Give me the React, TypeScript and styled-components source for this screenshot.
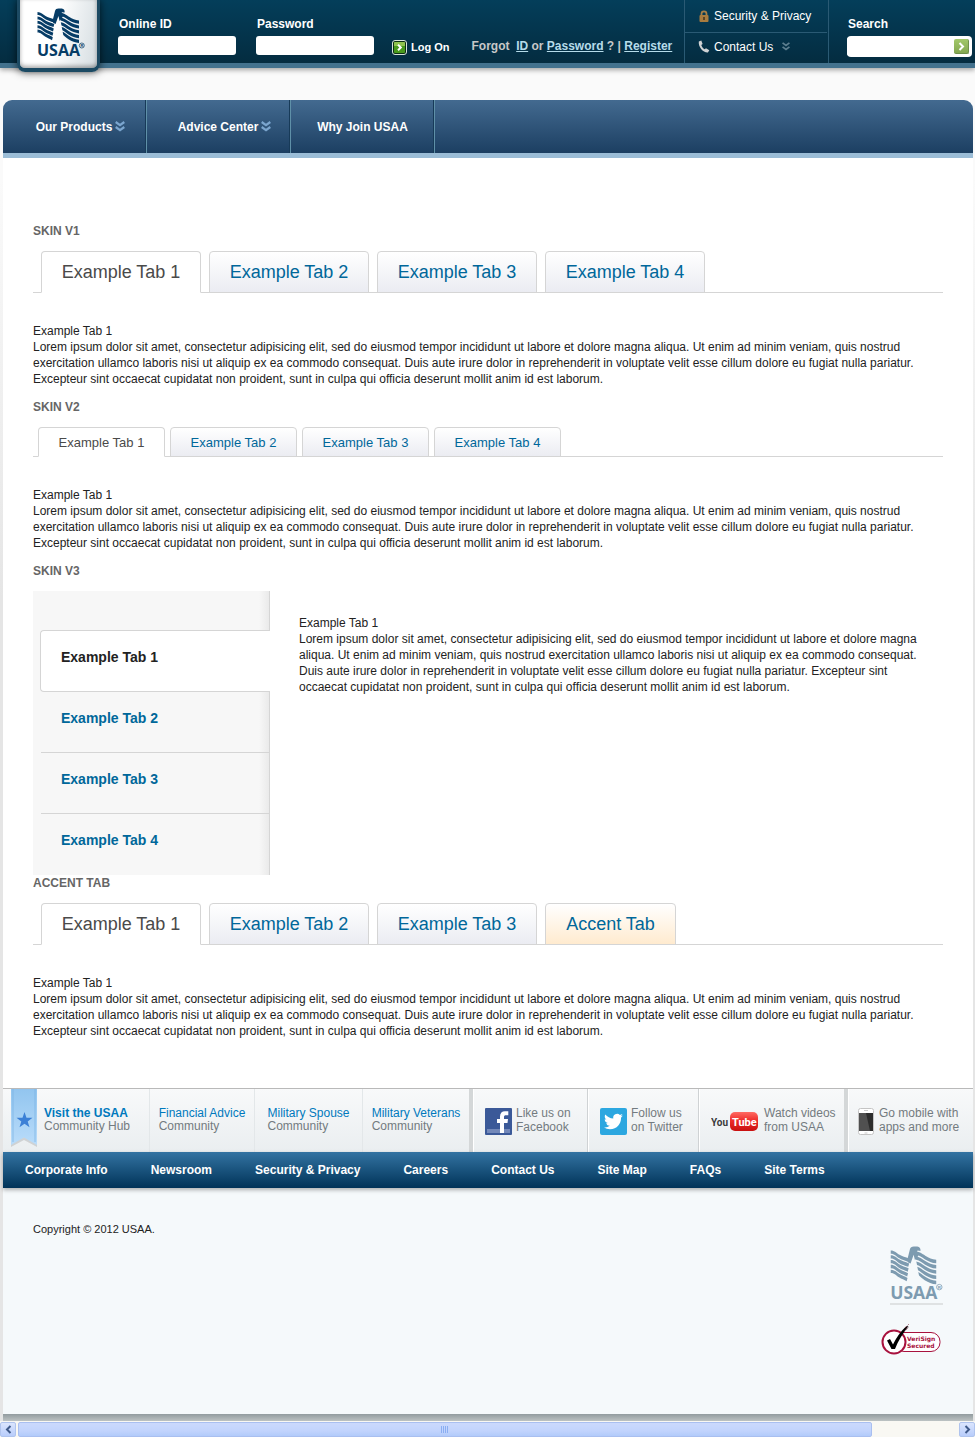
import React, { useState } from "react";
import styled, { createGlobalStyle } from "styled-components";

const sans = `"Liberation Sans", Arial, Helvetica, sans-serif`;
const blue = "#00679a";
const rule = "#d5d5d5";

const GlobalStyle = createGlobalStyle`
  *, *::before, *::after { box-sizing: border-box; }
  body {
    margin: 0;
    background: linear-gradient(#fafafa 0, #fafafa 180px, #e5e5e5 600px, #e5e5e5 100%);
    color: #222;
    font: 12px/16px ${sans};
  }
  a { color: inherit; text-decoration: none; }
  button, input { font: inherit; }
  button { cursor: pointer; }
  svg { display: block; flex: none; }
`;

/* ---------- header ---------- */

const Header = styled.header`
  display: flex;
  align-items: flex-start;
  height: 68px;
  background: linear-gradient(#043e5a, #042c40);
  border-bottom: 5px solid #43728e;
  box-shadow: 0 2px 5px rgba(0, 0, 0, 0.35);
`;

const LogoTab = styled.a`
  flex: none;
  width: 83px;
  height: 72px;
  margin: 0 18px -9px 17px;
  padding: 8px 0 0 17px;
  background: linear-gradient(100deg, #fff 45%, #d5dde1);
  border: solid #1c4a63;
  border-width: 0 3px 4px;
  border-radius: 0 0 8px 8px;
  box-shadow: inset 0 -2px 4px rgba(0, 0, 0, 0.35), 0 0 8px rgba(0, 0, 0, 0.7);
`;

const Field = styled.div`
  display: flex;
  flex-direction: column;
  gap: 4px;
  padding-top: 16px;
  margin-right: 20px;
`;

const FieldLabel = styled.label`
  padding-left: 1px;
  color: #fff;
  font-weight: bold;
`;

const TextInput = styled.input`
  width: 118px;
  height: 19px;
  padding: 0 4px;
  border: 0;
  border-radius: 3px;
  background: #fff;
`;

const LogOn = styled.button`
  display: flex;
  align-items: center;
  gap: 4px;
  margin: 39px 22px 0 -2px;
  padding: 0;
  border: 0;
  background: none;
  color: #fff;
  font-size: 11px;
  font-weight: bold;
  line-height: 16px;
`;

const Forgot = styled.p`
  margin: 38px 0 0;
  color: #c8c8c8;
  font-weight: bold;
  white-space: nowrap;
  a { color: #b6dcea; text-decoration: underline; }
`;

const HeaderEnd = styled.div`
  display: flex;
  margin-left: auto;
`;

const Utility = styled.nav`
  width: 145px;
  height: 63px;
  border: solid #2a5a74;
  border-width: 0 1px;
`;

const UtilityLink = styled.a`
  display: flex;
  align-items: center;
  gap: 4px;
  height: 32px;
  padding-left: 13px;
  color: #fff;
  & + & {
    height: 28px;
    margin-right: 1px;
    border-top: 1px solid #2a5a74;
  }
  svg:last-child:not(:first-child) { margin-left: 5px; }
`;

const SearchForm = styled.form`
  display: flex;
  flex-direction: column;
  gap: 4px;
  padding: 16px 3px 0 18px;
`;

const SearchBox = styled.div`
  display: flex;
  align-items: center;
  width: 125px;
  height: 21px;
  padding-right: 3px;
  border-radius: 4px;
  background: #fff;
`;

const SearchInput = styled(TextInput)`
  flex: 1;
  min-width: 0;
`;

const GoButton = styled.button`
  display: grid;
  place-items: center;
  width: 15px;
  height: 15px;
  padding: 0;
  border: solid #6f914a;
  border-width: 0 1px 1px 0;
  border-radius: 2px;
  background: linear-gradient(#a3c96a, #84a851);
`;

/* ---------- main navigation ---------- */

const Page = styled.div`
  margin: 32px 2px 0 3px;
`;

const MainNav = styled.nav`
  display: flex;
  height: 58px;
  border-bottom: 5px solid #9bbdd7;
  border-radius: 9px 9px 0 0;
  background: linear-gradient(#436a90, #1c3f62);
`;

const MainLink = styled.a<{ $menu?: boolean }>`
  display: flex;
  align-items: center;
  justify-content: center;
  gap: 3px;
  width: 144px;
  padding-left: ${(p) => (p.$menu ? 12 : 0)}px;
  border-right: 1px solid #5f90a8;
  box-shadow: inset -1px 0 #173a58;
  color: #fff;
  font-weight: bold;
`;

/* ---------- tab sets ---------- */

const Main = styled.main`
  padding: 65px 30px 49px;
  background: #fff;
`;

const Heading = styled.h2`
  margin: 0 0 12px;
  color: #666;
  font-size: 12px;
  line-height: 16px;
`;

const Section = styled.section<{ $flush?: boolean }>`
  margin-bottom: ${(p) => (p.$flush ? 0 : 12)}px;
  &:last-child { margin-bottom: 0; }
`;

const TabList = styled.div<{ $small?: boolean }>`
  display: flex;
  gap: ${(p) => (p.$small ? 5 : 8)}px;
  height: ${(p) => (p.$small ? 30 : 42)}px;
  padding-left: ${(p) => (p.$small ? 5 : 8)}px;
  margin-bottom: 30px;
  box-shadow: inset 0 -1px ${rule};
`;

const Tab = styled.button<{ $small?: boolean; $accent?: boolean }>`
  min-width: ${(p) => (p.$accent ? 131 : p.$small ? 127 : 160)}px;
  padding: ${(p) => (p.$small ? 2 : 0)}px 0 0;
  border: 1px solid ${rule};
  border-radius: 4px 4px 0 0;
  background: linear-gradient(#fff, ${(p) => (p.$accent ? "#ffebcf" : "#ebecf2")});
  color: ${blue};
  font-size: ${(p) => (p.$small ? 13 : 18)}px;
  line-height: ${(p) => (p.$small ? 16 : 24)}px;
  &[aria-selected="true"] {
    border-bottom-color: #fff;
    background: #fff;
    color: #4a4a4a;
  }
`;

const Panel = styled.div`
  p { margin: 0; }
`;

const SideLayout = styled.div`
  display: flex;
  gap: 29px;
  min-height: 284px;
  ${Panel} { flex: 1; padding: 24px 8px 0 0; }
`;

const SideTabs = styled.div`
  flex: none;
  width: 237px;
  padding: 39px 0 0 7px;
  background: linear-gradient(to left, ${rule} 1px, #eaeaea 1px, #f7f7f7 11px);
`;

const SideTab = styled.button`
  display: block;
  width: 229px;
  height: 61px;
  margin-left: 1px;
  padding: 0 20px 8px;
  border: 0;
  border-bottom: 1px solid ${rule};
  background: none;
  color: ${blue};
  font-size: 14px;
  font-weight: bold;
  text-align: left;
  &:last-child { border-bottom-color: transparent; }
  &[aria-selected="true"] {
    width: 230px;
    height: 62px;
    margin-left: 0;
    border: 1px solid ${rule};
    border-right: 0;
    border-radius: 4px 0 0 4px;
    background: #fff;
    color: #222;
  }
`;

/* ---------- footer ---------- */

const Community = styled.div`
  display: grid;
  grid-template-columns: 147px 105px 108px 110px 115px 111px 149px 1fr;
  height: 64px;
  border-top: 1px solid #b9b9b9;
  background: linear-gradient(#f8f9fa, #eaeef0);
`;

const CommunityLink = styled.a<{ $lead?: boolean; $end?: boolean }>`
  display: flex;
  justify-content: ${(p) => (p.$lead ? "flex-start" : "center")};
  padding-top: 18px;
  border-right: ${(p) => (p.$end ? "4px solid #d4d7d8" : "1px solid #e3e7e9")};
  color: #737b80;
  line-height: 13px;
  white-space: nowrap;
  strong {
    display: block;
    color: #0079bd;
    font-weight: ${(p) => (p.$lead ? "bold" : "normal")};
  }
`;

const Hub = styled.div`
  display: flex;
  gap: 6px;
  padding-left: 7px;
  ${CommunityLink} { flex: 1; }
`;

const SocialLink = styled.a<{ $end?: boolean }>`
  display: flex;
  align-items: center;
  gap: 4px;
  padding: 2px 0 0 11px;
  border-left: 1px solid #fff;
  border-right: ${(p) => (p.$end ? "4px solid #d4d7d8" : "1px solid #cfd2d4")};
  color: #737b80;
  line-height: 14px;
  white-space: nowrap;
  span { padding-bottom: 3px; }
  &:last-child { border-right: 0; padding-left: 9px; }
`;

const FooterNav = styled.nav`
  position: relative;
  display: flex;
  align-items: center;
  gap: 43px;
  height: 36px;
  padding-left: 22px;
  background: linear-gradient(#3373a2, #003358);
  box-shadow: 0 2px 4px rgba(0, 0, 0, 0.3);
  color: #fff;
  font-weight: bold;
  white-space: nowrap;
`;

const Legal = styled.footer`
  display: flex;
  justify-content: space-between;
  height: 226px;
  padding: 33px 30px 0;
  background: #f5f9fb;
  font-size: 11px;
  p { margin: 0; }
`;

const Seals = styled.div`
  display: flex;
  flex-direction: column;
  align-items: flex-end;
  gap: 19px;
  padding-top: 25px;
`;

const Seal = styled.a<{ $line?: boolean }>`
  margin-right: ${(p) => (p.$line ? 0 : 2)}px;
  border-bottom: ${(p) => (p.$line ? "2px solid #dfe2e3" : "0")};
`;

const PageShadow = styled.div`
  height: 7px;
  background: linear-gradient(#929c9f, #bcc2c3);
`;

const ScrollBar = styled.div`
  display: flex;
  height: 16px;
  padding-top: 1px;
  gap: 2px;
  background: #f9f8f3;
`;

const ScrollButton = styled.button`
  display: grid;
  place-items: center;
  width: 16px;
  padding: 0;
  border: 1px solid #b0c4ee;
  border-radius: 2px;
  background: linear-gradient(#dbe5fe, #b8cdfb);
`;

const ScrollTrack = styled.div`
  flex: 1;
  display: flex;
`;

const ScrollThumb = styled.div`
  display: grid;
  place-items: center;
  width: 91%;
  border: 1px solid #a9bff0;
  border-radius: 2px;
  background: linear-gradient(#cbd9fd, #c2d4fd 60%, #b2cbfa);
`;

/* ---------- drawings ---------- */

const feathers = [0, 1, 2, 3, 4];

function EagleLogo({ color, width = 48, height = 52 }: { color: string; width?: number; height?: number }) {
  return (
    <svg width={width} height={height} viewBox="0 0 48 52" role="img" aria-label="USAA">
      <g fill={color}>
        {feathers.map((i) => {
          const y = 4 + i * 4.4;
          const end = 17.8 - i * 0.5;
          return (
            <path
              key={i}
              d={`M.5 ${y}C4 ${y} 6 ${y + 2.4} 8.500 ${y + 4}C11 ${y + 5.6} 13.500 ${y + 6} ${end} ${y + 7.6}L${end - 0.8} ${y + 10.6}C13 ${y + 9.2} 10.500 ${y + 8.600} 8 ${y + 7}C5.500 ${y + 5.400} 4 ${y + 3} .5 ${y + 3}Z`}
            />
          );
        })}
        <path d="M15.500 13 18 3C18.400 1.300 19.600.5 21.500.5h3.200C27 .7 27.900 2.300 27.600 4.600L25 4.200 24 6l2 2.500-1.500 2L22.600 13l-1.200-5L18.600 16l-2.200-1z" />
        {feathers.map((i) => {
          const y = 4.6 + i * 4.8;
          const start = 22 + i * 0.9;
          return (
            <path
              key={i}
              d={`M${start} ${y}C27 ${y + 0.5} 29 ${y + 2.4} 32 ${y + 4.2}C35.500 ${y + 6.4} 38 ${y + 7.4} 42 ${y + 8}V${y + 11.2}C38 ${y + 10.800} 35 ${y + 9.600} 31.500 ${y + 7.400}C29 ${y + 5.800} 27 ${y + 3.900} ${start + 0.7} ${y + 3.200}Z`}
            />
          );
        })}
        <text x="0" y="48" fontFamily="Open Sans, Noto Sans, sans-serif" fontSize="16" fontWeight="700">USAA</text>
        <circle cx="44.800" cy="37.500" r="2.500" fill="none" stroke={color} strokeWidth=".7" />
        <text x="43.400" y="39.200" fontFamily="Liberation Sans, sans-serif" fontSize="4" fontWeight="700">R</text>
      </g>
    </svg>
  );
}

const DoubleChevron = ({ color, size = 10 }: { color: string; size?: number }) => (
  <svg width={size} height="11" viewBox="0 0 10 11" fill="none" stroke={color} strokeWidth="2.200" aria-hidden="true">
    <path d="M.7 1 5 4.200 9.300 1M.7 6 5 9.200 9.300 6" />
  </svg>
);

const LogOnIcon = () => (
  <svg width="15" height="15" viewBox="0 0 15 15" aria-hidden="true">
    <rect x=".5" y=".5" width="14" height="14" rx="2.500" fill="#0b2f14" stroke="#d8e4dc" />
    <rect x="2" y="2" width="11" height="11" rx="1" fill="#489a1c" />
    <path d="M2 3a1 1 0 0 1 1-1h9a1 1 0 0 1 1 1v3H2z" fill="#8fc34f" />
    <path d="m6 4.800 2.800 2.700L6 10.200" fill="none" stroke="#fff" strokeWidth="2" />
  </svg>
);

const LockIcon = () => (
  <svg width="12" height="13" viewBox="0 0 12 13" aria-hidden="true">
    <path d="M3.500 6V3.800a2.500 2.500 0 0 1 5 0V6" fill="none" stroke="#a98048" strokeWidth="1.800" />
    <rect x="1.500" y="5" width="9" height="7" rx="1" fill="#a97c3f" />
    <path d="M5.300 7h1.400v3H5.300z" fill="#3d2f1c" />
  </svg>
);

const PhoneIcon = () => (
  <svg width="12" height="13" viewBox="0 0 12 13" aria-hidden="true">
    <path d="M.8 1.500 3.300.6 4.600 4 3.300 5c.5 1.900 1.700 3.400 3.300 4.300l1.400-1 3.300 2-1.400 2.200C5 12.800.2 7 .8 1.500z" fill="#d0d3d5" />
  </svg>
);

const Ribbon = () => (
  <svg width="28" height="58" viewBox="0 0 28 58" aria-hidden="true">
    <defs>
      <linearGradient id="ribbon" x1="0" y1="0" x2="0" y2="1">
        <stop offset="0" stopColor="#92c5ef" />
        <stop offset="1" stopColor="#b9dcfa" />
      </linearGradient>
    </defs>
    <path d="M1 1h26v57l-13-7-13 7z" fill="#000" opacity=".12" />
    <path d="M1 0h26v56l-13-7.500L1 56z" fill="url(#ribbon)" />
    <path d="M3 0v53M25 0v53" stroke="#79b2e4" opacity=".7" />
    <path d="m14.500 23 2 5.800h6l-4.800 3.700 1.800 5.800-5-3.500-5 3.500 1.800-5.800-4.800-3.700h6z" fill="#3c80d6" />
  </svg>
);

const FacebookIcon = () => (
  <svg width="27" height="27" viewBox="0 0 27 27" aria-hidden="true">
    <rect width="27" height="27" rx="1" fill="#3b5998" />
    <path d="M2 21h23v4H2z" fill="#7388b9" />
    <path d="M15 25V15h-3v-4h3V8.500C15 5 17 3.300 20 3.300h3.300v4H21c-1.500 0-2 .6-2 1.900V11h4l-.5 4H19v10z" fill="#fff" />
  </svg>
);

const TwitterIcon = () => (
  <svg width="27" height="27" viewBox="0 0 27 27" aria-hidden="true">
    <rect width="27" height="27" rx="2" fill="#2ca7e0" />
    <path transform="translate(4 4) scale(.79)" fill="#fff" d="M23.950 4.570a10 10 0 0 1-2.820.77 4.960 4.960 0 0 0 2.160-2.720c-.95.550-2 .96-3.130 1.180a4.920 4.920 0 0 0-8.380 4.480C7.690 8.100 4.070 6.130 1.640 3.160a4.820 4.820 0 0 0-.67 2.480c0 1.710.87 3.210 2.190 4.100a4.900 4.900 0 0 1-2.230-.62v.06a4.920 4.920 0 0 0 3.950 4.830 5 5 0 0 1-2.210.08 4.940 4.940 0 0 0 4.600 3.420A9.870 9.870 0 0 1 0 19.540a13.990 13.990 0 0 0 7.550 2.210c9.050 0 14-7.500 14-13.980l-.02-.64a9.930 9.930 0 0 0 2.420-2.560z" />
  </svg>
);

const YouTubeIcon = () => (
  <svg width="49" height="22" viewBox="0 0 49 22" role="img" aria-label="YouTube">
    <defs>
      <linearGradient id="tube" x1="0" y1="0" x2="0" y2="1">
        <stop offset="0" stopColor="#ff6a62" />
        <stop offset=".45" stopColor="#ee2c2a" />
        <stop offset="1" stopColor="#c8100f" />
      </linearGradient>
    </defs>
    <rect x="19" y="1" width="28" height="19" rx="5" fill="url(#tube)" />
    <g fontFamily="Roboto, Liberation Sans, sans-serif" fontWeight="bold">
      <text x="0" y="15" fill="#3a3a3a" fontSize="10">You</text>
      <text x="21" y="15" fill="#fff" fontSize="11">Tube</text>
    </g>
  </svg>
);

const MobileIcon = () => (
  <svg width="17" height="28" viewBox="0 0 17 28" aria-hidden="true">
    <rect x=".5" y=".5" width="15" height="26" rx="2" fill="#fff" stroke="#c4c4c4" />
    <rect x="1" y="5" width="14" height="18" fill="#2c2c2c" />
    <path d="M1 5h7l4 18H1z" fill="#505050" />
    <path d="M6 2.500h4M6.500 25h3" stroke="#ccc" />
  </svg>
);

const VeriSignSeal = () => (
  <svg width="60" height="32" viewBox="0 0 60 32" role="img" aria-label="VeriSign Secured">
    <rect x="14" y="8.500" width="45" height="19" rx="9" fill="#fff" stroke="#a8123e" />
    <circle cx="13" cy="18" r="11.500" fill="#fff" stroke="#a8123e" strokeWidth="2" />
    <path d="M6 16.500 9 15l3 5.500C15 14 19.500 7.500 25 2.500L27.500 2C22 9 17 17 14 25h-3.500z" fill="#000" />
    <path d="m24 4 4-4M23.500 7 28 3" stroke="#7a2036" strokeDasharray="1 1" />
    <g fill="#a8123e" fontFamily="DejaVu Sans, sans-serif" fontSize="6" fontWeight="bold">
      <text x="26" y="17">VeriSign</text>
      <text x="26" y="24">Secured</text>
    </g>
  </svg>
);

const ArrowGlyph = ({ flip, color = "#3f5a8a" }: { flip?: boolean; color?: string }) => (
  <svg width="7" height="9" viewBox="0 0 7 9" fill="none" stroke={color} strokeWidth="2" aria-hidden="true">
    <path d={flip ? "M5.500 1 2 4.500 5.500 8" : "M1.500 1 5 4.500 1.500 8"} />
  </svg>
);

/* ---------- content ---------- */

const tabNames = ["Example Tab 1", "Example Tab 2", "Example Tab 3", "Example Tab 4"];
const accentNames = ["Example Tab 1", "Example Tab 2", "Example Tab 3", "Accent Tab"];

const lorem =
  "Lorem ipsum dolor sit amet, consectetur adipisicing elit, sed do eiusmod tempor incididunt ut labore et dolore magna aliqua. Ut enim ad minim veniam, quis nostrud exercitation ullamco laboris nisi ut aliquip ex ea commodo consequat. Duis aute irure dolor in reprehenderit in voluptate velit esse cillum dolore eu fugiat nulla pariatur. Excepteur sint occaecat cupidatat non proident, sunt in culpa qui officia deserunt mollit anim id est laborum.";

const TabPanel = ({ name }: { name: string }) => (
  <Panel role="tabpanel">
    <p>{name}</p>
    <p>{lorem}</p>
  </Panel>
);

function TabSet({ title, names, small }: { title: string; names: string[]; small?: boolean }) {
  const [active, setActive] = useState(0);
  return (
    <Section>
      <Heading>{title}</Heading>
      <TabList role="tablist" $small={small}>
        {names.map((name, i) => (
          <Tab
            key={name}
            type="button"
            role="tab"
            aria-selected={i === active}
            $small={small}
            $accent={name === "Accent Tab"}
            onClick={() => setActive(i)}
          >
            {name}
          </Tab>
        ))}
      </TabList>
      <TabPanel name={names[active]} />
    </Section>
  );
}

function SideTabSet({ title, names }: { title: string; names: string[] }) {
  const [active, setActive] = useState(0);
  return (
    <Section $flush>
      <Heading>{title}</Heading>
      <SideLayout>
        <SideTabs role="tablist" aria-orientation="vertical">
          {names.map((name, i) => (
            <SideTab key={name} type="button" role="tab" aria-selected={i === active} onClick={() => setActive(i)}>
              {name}
            </SideTab>
          ))}
        </SideTabs>
        <TabPanel name={names[active]} />
      </SideLayout>
    </Section>
  );
}

const footerLinks = ["Corporate Info", "Newsroom", "Security & Privacy", "Careers", "Contact Us", "Site Map", "FAQs", "Site Terms"];

export default function App() {
  return (
    <>
      <GlobalStyle />
      <Header>
        <LogoTab href="#"><EagleLogo color="#063c66" /></LogoTab>
        <Field>
          <FieldLabel htmlFor="online-id">Online ID</FieldLabel>
          <TextInput id="online-id" type="text" />
        </Field>
        <Field>
          <FieldLabel htmlFor="password">Password</FieldLabel>
          <TextInput id="password" type="password" />
        </Field>
        <LogOn type="button"><LogOnIcon />Log On</LogOn>
        <Forgot>
          Forgot&nbsp; <a href="#">ID</a> or <a href="#">Password</a> ? | <a href="#">Register</a>
        </Forgot>
        <HeaderEnd>
          <Utility>
            <UtilityLink href="#"><LockIcon />Security &amp; Privacy</UtilityLink>
            <UtilityLink href="#"><PhoneIcon />Contact Us<DoubleChevron color="#5d7f90" size={8} /></UtilityLink>
          </Utility>
          <SearchForm onSubmit={(e) => e.preventDefault()}>
            <FieldLabel htmlFor="search">Search</FieldLabel>
            <SearchBox>
              <SearchInput id="search" type="text" />
              <GoButton type="submit" aria-label="Go"><ArrowGlyph color="#fff" /></GoButton>
            </SearchBox>
          </SearchForm>
        </HeaderEnd>
      </Header>

      <Page>
        <MainNav>
          <MainLink href="#" $menu>Our Products<DoubleChevron color="#7ba6cf" /></MainLink>
          <MainLink href="#" $menu>Advice Center<DoubleChevron color="#7ba6cf" /></MainLink>
          <MainLink href="#">Why Join USAA</MainLink>
        </MainNav>

        <Main>
          <TabSet title="SKIN V1" names={tabNames} />
          <TabSet title="SKIN V2" names={tabNames} small />
          <SideTabSet title="SKIN V3" names={tabNames} />
          <TabSet title="ACCENT TAB" names={accentNames} />
        </Main>

        <Community>
          <Hub>
            <Ribbon />
            <CommunityLink href="#" $lead><span><strong>Visit the USAA</strong>Community Hub</span></CommunityLink>
          </Hub>
          <CommunityLink href="#"><span><strong>Financial Advice</strong>Community</span></CommunityLink>
          <CommunityLink href="#"><span><strong>Military Spouse</strong>Community</span></CommunityLink>
          <CommunityLink href="#" $end><span><strong>Military Veterans</strong>Community</span></CommunityLink>
          <SocialLink href="#"><FacebookIcon /><span>Like us on<br />Facebook</span></SocialLink>
          <SocialLink href="#"><TwitterIcon /><span>Follow us<br />on Twitter</span></SocialLink>
          <SocialLink href="#" $end><YouTubeIcon /><span>Watch videos<br />from USAA</span></SocialLink>
          <SocialLink href="#"><MobileIcon /><span>Go mobile with<br />apps and more</span></SocialLink>
        </Community>
        <FooterNav>
          {footerLinks.map((name) => <a key={name} href="#">{name}</a>)}
        </FooterNav>
        <Legal>
          <p>Copyright © 2012 USAA.</p>
          <Seals>
            <Seal href="#" $line><EagleLogo color="#7d9bb0" width={53} height={57} /></Seal>
            <Seal href="#"><VeriSignSeal /></Seal>
          </Seals>
        </Legal>
        <PageShadow />
      </Page>
      <ScrollBar>
        <ScrollButton type="button" aria-label="Scroll left"><ArrowGlyph flip /></ScrollButton>
        <ScrollTrack>
          <ScrollThumb>
            <svg width="8" height="7" viewBox="0 0 8 7" stroke="#8aaef2" aria-hidden="true"><path d="M.5 0v7M2.500 0v7M4.500 0v7M6.500 0v7" /></svg>
          </ScrollThumb>
        </ScrollTrack>
        <ScrollButton type="button" aria-label="Scroll right"><ArrowGlyph /></ScrollButton>
      </ScrollBar>
    </>
  );
}
